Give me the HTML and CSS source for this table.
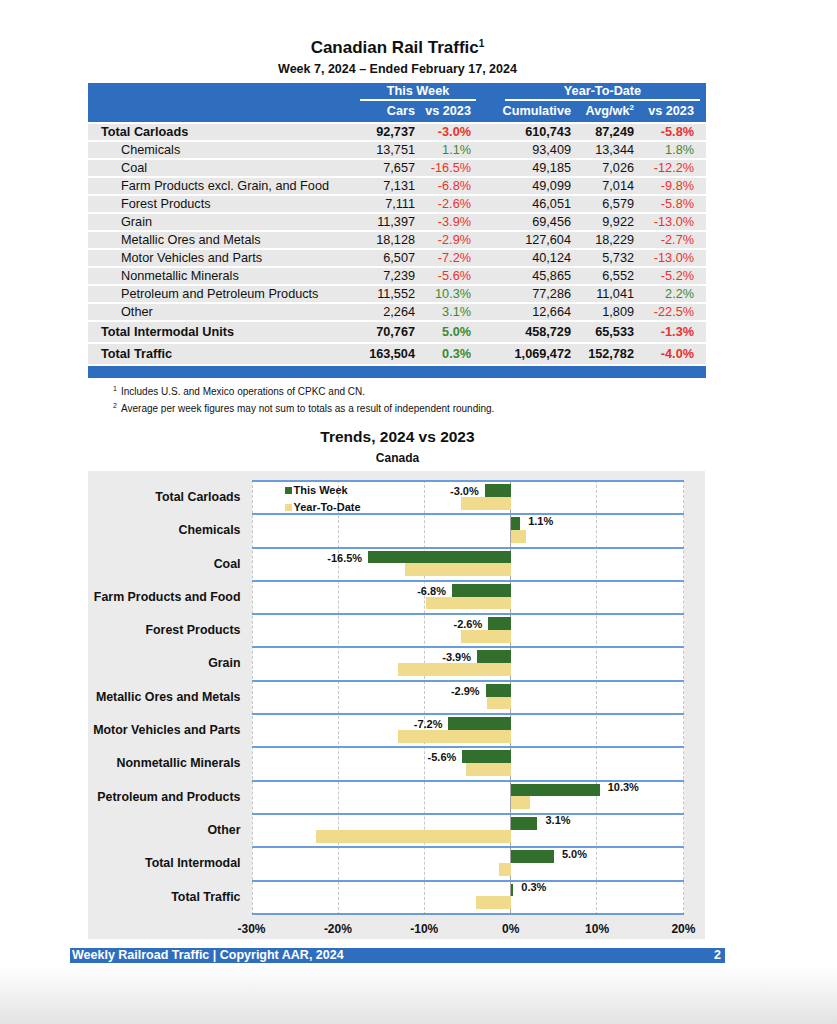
FILE: index.html
```html
<!DOCTYPE html>
<html lang="en">
<head>
<meta charset="utf-8">
<title>Canadian Rail Traffic</title>
<link rel="stylesheet" href="styles.css">
</head>
<body>
<div class="page">
  <header class="doc-head">
    <h1 class="title">Canadian Rail Traffic<sup>1</sup></h1>
    <p class="subtitle">Week 7, 2024 – Ended February 17, 2024</p>
  </header>

  <section class="traffic">
    <div class="thead">
      <div class="grp grp-week">This Week</div>
      <div class="grp grp-ytd">Year-To-Date</div>
      <div class="ch c2">Cars</div>
      <div class="ch c3">vs 2023</div>
      <div class="ch c4">Cumulative</div>
      <div class="ch c5">Avg/wk<sup>2</sup></div>
      <div class="ch c6">vs 2023</div>
    </div>
    <div class="row total"><span class="lbl">Total Carloads</span><span>92,737</span><span class="neg">-3.0%</span><span>610,743</span><span>87,249</span><span class="neg">-5.8%</span></div>
    <div class="row"><span class="lbl">Chemicals</span><span>13,751</span><span class="pos">1.1%</span><span>93,409</span><span>13,344</span><span class="pos">1.8%</span></div>
    <div class="row"><span class="lbl">Coal</span><span>7,657</span><span class="neg">-16.5%</span><span>49,185</span><span>7,026</span><span class="neg">-12.2%</span></div>
    <div class="row"><span class="lbl">Farm Products excl. Grain, and Food</span><span>7,131</span><span class="neg">-6.8%</span><span>49,099</span><span>7,014</span><span class="neg">-9.8%</span></div>
    <div class="row"><span class="lbl">Forest Products</span><span>7,111</span><span class="neg">-2.6%</span><span>46,051</span><span>6,579</span><span class="neg">-5.8%</span></div>
    <div class="row"><span class="lbl">Grain</span><span>11,397</span><span class="neg">-3.9%</span><span>69,456</span><span>9,922</span><span class="neg">-13.0%</span></div>
    <div class="row"><span class="lbl">Metallic Ores and Metals</span><span>18,128</span><span class="neg">-2.9%</span><span>127,604</span><span>18,229</span><span class="neg">-2.7%</span></div>
    <div class="row"><span class="lbl">Motor Vehicles and Parts</span><span>6,507</span><span class="neg">-7.2%</span><span>40,124</span><span>5,732</span><span class="neg">-13.0%</span></div>
    <div class="row"><span class="lbl">Nonmetallic Minerals</span><span>7,239</span><span class="neg">-5.6%</span><span>45,865</span><span>6,552</span><span class="neg">-5.2%</span></div>
    <div class="row"><span class="lbl">Petroleum and Petroleum Products</span><span>11,552</span><span class="pos">10.3%</span><span>77,286</span><span>11,041</span><span class="pos">2.2%</span></div>
    <div class="row"><span class="lbl">Other</span><span>2,264</span><span class="pos">3.1%</span><span>12,664</span><span>1,809</span><span class="neg">-22.5%</span></div>
    <div class="row total big"><span class="lbl">Total Intermodal Units</span><span>70,767</span><span class="pos">5.0%</span><span>458,729</span><span>65,533</span><span class="neg">-1.3%</span></div>
    <div class="row total big"><span class="lbl">Total Traffic</span><span>163,504</span><span class="pos">0.3%</span><span>1,069,472</span><span>152,782</span><span class="neg">-4.0%</span></div>
    <div class="tfoot"></div>
  </section>

  <ol class="notes">
    <li><sup>1</sup>Includes U.S. and Mexico operations of CPKC and CN.</li>
    <li><sup>2</sup>Average per week figures may not sum to totals as a result of independent rounding.</li>
  </ol>

  <h2 class="chart-title">Trends, 2024 vs 2023</h2>
  <p class="chart-sub">Canada</p>

  <section class="chart">
    <div class="cats">
      <div>Total Carloads</div>
      <div>Chemicals</div>
      <div>Coal</div>
      <div>Farm Products and Food</div>
      <div>Forest Products</div>
      <div>Grain</div>
      <div>Metallic Ores and Metals</div>
      <div>Motor Vehicles and Parts</div>
      <div>Nonmetallic Minerals</div>
      <div>Petroleum and Products</div>
      <div>Other</div>
      <div>Total Intermodal</div>
      <div>Total Traffic</div>
    </div>
    <div class="plot">
      <div class="gridlines"><span></span><span></span><span class="zero"></span><span></span><span></span></div>
      <div class="legend">
        <div><i class="sw wk"></i>This Week</div>
        <div><i class="sw ytd"></i>Year-To-Date</div>
      </div>

      <div class="prow">
        <div class="line"><span class="lead" style="width:54%"><b class="val">-3.0%</b></span><span class="bar wk" style="width:6%"></span></div>
        <div class="line"><span class="lead" style="width:48.4%"></span><span class="bar ytd" style="width:11.6%"></span></div>
      </div>
      <div class="prow">
        <div class="line"><span class="lead" style="width:60%"></span><span class="bar wk" style="width:2.2%"></span><b class="val after">1.1%</b></div>
        <div class="line"><span class="lead" style="width:60%"></span><span class="bar ytd" style="width:3.6%"></span></div>
      </div>
      <div class="prow">
        <div class="line"><span class="lead" style="width:27%"><b class="val">-16.5%</b></span><span class="bar wk" style="width:33%"></span></div>
        <div class="line"><span class="lead" style="width:35.6%"></span><span class="bar ytd" style="width:24.4%"></span></div>
      </div>
      <div class="prow">
        <div class="line"><span class="lead" style="width:46.4%"><b class="val">-6.8%</b></span><span class="bar wk" style="width:13.6%"></span></div>
        <div class="line"><span class="lead" style="width:40.4%"></span><span class="bar ytd" style="width:19.6%"></span></div>
      </div>
      <div class="prow">
        <div class="line"><span class="lead" style="width:54.8%"><b class="val">-2.6%</b></span><span class="bar wk" style="width:5.2%"></span></div>
        <div class="line"><span class="lead" style="width:48.4%"></span><span class="bar ytd" style="width:11.6%"></span></div>
      </div>
      <div class="prow">
        <div class="line"><span class="lead" style="width:52.2%"><b class="val">-3.9%</b></span><span class="bar wk" style="width:7.8%"></span></div>
        <div class="line"><span class="lead" style="width:34%"></span><span class="bar ytd" style="width:26%"></span></div>
      </div>
      <div class="prow">
        <div class="line"><span class="lead" style="width:54.2%"><b class="val">-2.9%</b></span><span class="bar wk" style="width:5.8%"></span></div>
        <div class="line"><span class="lead" style="width:54.6%"></span><span class="bar ytd" style="width:5.4%"></span></div>
      </div>
      <div class="prow">
        <div class="line"><span class="lead" style="width:45.6%"><b class="val">-7.2%</b></span><span class="bar wk" style="width:14.4%"></span></div>
        <div class="line"><span class="lead" style="width:34%"></span><span class="bar ytd" style="width:26%"></span></div>
      </div>
      <div class="prow">
        <div class="line"><span class="lead" style="width:48.8%"><b class="val">-5.6%</b></span><span class="bar wk" style="width:11.2%"></span></div>
        <div class="line"><span class="lead" style="width:49.6%"></span><span class="bar ytd" style="width:10.4%"></span></div>
      </div>
      <div class="prow">
        <div class="line"><span class="lead" style="width:60%"></span><span class="bar wk" style="width:20.6%"></span><b class="val after">10.3%</b></div>
        <div class="line"><span class="lead" style="width:60%"></span><span class="bar ytd" style="width:4.4%"></span></div>
      </div>
      <div class="prow">
        <div class="line"><span class="lead" style="width:60%"></span><span class="bar wk" style="width:6.2%"></span><b class="val after">3.1%</b></div>
        <div class="line"><span class="lead" style="width:15%"></span><span class="bar ytd" style="width:45%"></span></div>
      </div>
      <div class="prow">
        <div class="line"><span class="lead" style="width:60%"></span><span class="bar wk" style="width:10%"></span><b class="val after">5.0%</b></div>
        <div class="line"><span class="lead" style="width:57.4%"></span><span class="bar ytd" style="width:2.6%"></span></div>
      </div>
      <div class="prow last">
        <div class="line"><span class="lead" style="width:60%"></span><span class="bar wk" style="width:0.6%"></span><b class="val after">0.3%</b></div>
        <div class="line"><span class="lead" style="width:52%"></span><span class="bar ytd" style="width:8%"></span></div>
      </div>
    </div>
    <div class="axis">
      <span>-30%</span><span>-20%</span><span>-10%</span><span>0%</span><span>10%</span><span>20%</span>
    </div>
  </section>

  <footer class="foot">
    <span>Weekly Railroad Traffic | Copyright AAR, 2024</span>
    <span>2</span>
  </footer>
</div>
</body>
</html>
```

FILE: styles.css
```css
html {
  height: 1024px;
  background: linear-gradient(to bottom, #ffffff 0, #ffffff 966px, #e3e3e3 1024px);
}

body {
  margin: 0;
  font-family: "Liberation Sans", Arial, Helvetica, sans-serif;
  color: #111;
}

.page {
  width: 655px;
  margin-left: 70px;
  padding-top: 37px;
}

/* ---------- heading ---------- */
.title {
  margin: 0;
  font-size: 17px;
  line-height: 22px;
  font-weight: bold;
  text-align: center;
}
.title sup {
  font-size: 10px;
  line-height: 0;
  vertical-align: 6px;
}
.subtitle {
  margin: 2px 0 0;
  font-size: 12.5px;
  line-height: 16px;
  font-weight: bold;
  text-align: center;
}

/* ---------- table ---------- */
.traffic {
  margin: 6px 19px 0 18px;
  font-size: 12.7px;
}
.thead,
.row {
  display: grid;
  grid-template-columns: 267px 60px 56px 100px 63px 60px 12px;
}
.thead {
  background: #2f6ebf;
  color: #fff;
  font-weight: bold;
  padding: 1px 0 4px;
  grid-template-rows: auto auto;
}
.grp {
  grid-row: 1;
  line-height: 14px;
  padding-bottom: 1px;
  border-bottom: 2px solid #fff;
  text-align: center;
}
.grp-week {
  grid-column: 2 / 4;
  margin: 0 -5px 0 5px;
}
.grp-ytd {
  grid-column: 4 / 7;
  margin: 0 -6px 0 34px;
}
.ch {
  grid-row: 2;
  margin-top: 3px;
  line-height: 14px;
  text-align: right;
}
.ch sup {
  font-size: 8px;
  line-height: 0;
  vertical-align: 5px;
}
.c2 { grid-column: 2; }
.c3 { grid-column: 3; }
.c4 { grid-column: 4; }
.c5 { grid-column: 5; }
.c6 { grid-column: 6; }

.row {
  margin-top: 2px;
  height: 16px;
  line-height: 17px;
  background: #e8e8e8;
}
.row > span {
  text-align: right;
  white-space: nowrap;
}
.row > .lbl {
  text-align: left;
  padding-left: 33px;
}
.row.total {
  font-weight: bold;
}
.row.total > .lbl {
  padding-left: 13px;
}
.row.big {
  height: 20px;
  line-height: 21px;
}
.neg { color: #e8322b; }
.pos { color: #3b8a35; }

.tfoot {
  margin-top: 2px;
  height: 12px;
  background: #2f6ebf;
}

/* ---------- notes ---------- */
.notes {
  list-style: none;
  margin: 5px 0 0;
  padding: 0 0 0 43px;
  font-size: 10px;
  line-height: 17px;
}
.notes sup {
  display: inline-block;
  width: 8px;
  font-size: 7px;
  line-height: 0;
  vertical-align: 4px;
}

/* ---------- chart titles ---------- */
.chart-title {
  margin: 10px 0 0;
  font-size: 15.5px;
  line-height: 20px;
  font-weight: bold;
  text-align: center;
}
.chart-sub {
  margin: 3px 0 0;
  font-size: 12px;
  line-height: 16px;
  font-weight: bold;
  text-align: center;
}

/* ---------- chart ---------- */
.chart {
  margin: 5px 0 0 18px;
  width: 617px;
  box-sizing: border-box;
  background: #ebebeb;
  padding: 9px 0 0;
  display: grid;
  grid-template-columns: 163.5px 432px;
  grid-template-rows: auto 24px;
}
.cats {
  grid-column: 1;
  grid-row: 1;
  padding-top: 1px;
  padding-right: 11px;
  font-size: 12.4px;
  font-weight: bold;
  text-align: right;
}
.cats > div {
  height: 33.31px;
  line-height: 33.31px;
  white-space: nowrap;
}

.plot {
  grid-column: 2;
  grid-row: 1;
  position: relative;
  background: #fff;
}
.gridlines {
  position: absolute;
  inset: 0;
  display: flex;
  border-left: 1px dashed #c6c6c6;
}
.gridlines > span {
  flex: 1;
  border-right: 1px dashed #c6c6c6;
}
.gridlines > span.zero {
  border-right: 1px solid #a3a3a3;
}

.legend {
  position: absolute;
  left: 33px;
  top: 2px;
  z-index: 2;
  font-size: 11px;
  font-weight: bold;
  line-height: 17px;
}
.legend > div {
  display: flex;
  align-items: center;
  white-space: nowrap;
}
.sw {
  width: 7px;
  height: 7px;
  margin-right: 2px;
}
.sw.wk { background: #336f2c; }
.sw.ytd { background: #f0da8c; }

.prow {
  position: relative;
  z-index: 1;
  box-sizing: border-box;
  height: 33.31px;
  border-top: 2px solid #6b9ddc;
  padding-top: 2px;
  display: flex;
  flex-direction: column;
}
.prow.last {
  height: 35.31px;
  border-bottom: 2px solid #6b9ddc;
}
.line {
  display: flex;
  align-items: center;
  height: 12.8px;
}
.lead {
  flex: none;
  height: 100%;
  text-align: right;
  box-sizing: border-box;
  padding-right: 6px;
}
.bar {
  flex: none;
  height: 100%;
}
.bar.wk { background: #336f2c; }
.bar.ytd { background: #f0da8c; }
.val {
  display: inline-block;
  font-size: 11px;
  font-weight: bold;
  line-height: 12px;
  white-space: nowrap;
  position: relative;
  top: -3px;
}
.val.after {
  margin-left: 8px;
}

.axis {
  grid-column: 2;
  grid-row: 2;
  display: flex;
  justify-content: space-between;
  width: 480px;
  margin-left: -24px;
  padding-top: 6px;
  font-size: 12px;
  font-weight: bold;
  line-height: 16px;
}
.axis > span {
  width: 48px;
  text-align: center;
}

/* ---------- footer ---------- */
.foot {
  margin-top: 9px;
  height: 15px;
  background: #2f6ebf;
  color: #fff;
  font-size: 12.5px;
  font-weight: bold;
  line-height: 15px;
  display: flex;
  justify-content: space-between;
  padding: 0 4px 0 2px;
}
```
